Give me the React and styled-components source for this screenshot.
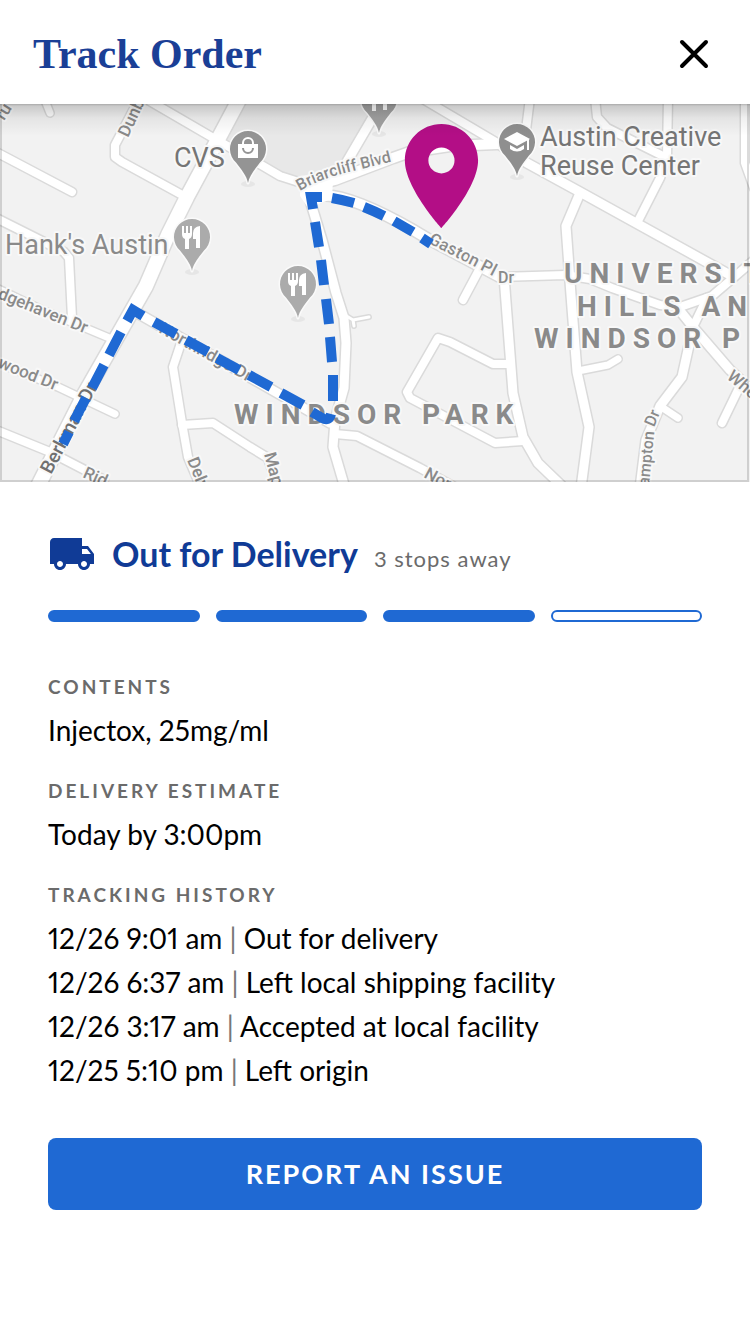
import React from "react";
import styled, { createGlobalStyle } from "styled-components";
import { MdLocalShipping } from "react-icons/md";

const GlobalStyle = createGlobalStyle`
  *, *::before, *::after { box-sizing: border-box; }
  body {
    margin: 0;
    background: #fff;
    color: #000;
    font-family: Lato, "Open Sans", sans-serif;
    font-variant-numeric: proportional-nums;
  }
  h1, h2, p, ol { margin: 0; padding: 0; }
`;

const Screen = styled.div`
  display: flex;
  flex-direction: column;
  min-height: 100vh;
  background: #fff;
`;

const Header = styled.header`
  position: relative;
  z-index: 1;
  display: flex;
  align-items: center;
  justify-content: space-between;
  height: 104px;
  padding: 4px 32px 0 33px;
  background: #fff;

  &::after {
    content: "";
    position: absolute;
    top: 100%;
    left: 0;
    right: 0;
    height: 32px;
    background: linear-gradient(
      rgba(0, 0, 0, 0.3),
      rgba(0, 0, 0, 0.17) 2px,
      rgba(0, 0, 0, 0.06) 14px,
      rgba(0, 0, 0, 0)
    );
    pointer-events: none;
  }
`;

const Title = styled.h1`
  color: #1a3f96;
  font: 700 42px/48px "Liberation Serif", serif;
`;

const CloseButton = styled.button`
  display: grid;
  place-items: center;
  width: 48px;
  height: 48px;
  padding: 0;
  border: 0;
  background: none;
  color: #000;
  cursor: pointer;
`;

const MapCanvas = styled.svg`
  display: block;
  width: 100%;
  height: auto;
  background: #f2f2f2;
`;

const Label = styled.text`
  font-family: Roboto, sans-serif;
  font-size: ${(p) => p.$size || 17}px;
  font-weight: ${(p) => p.$weight || 500};
  letter-spacing: ${(p) => p.$tracking || 0}px;
  fill: ${(p) => p.$color || "#8a8a8a"};
  stroke: #f8f8f8;
  stroke-width: 4px;
  stroke-linejoin: round;
  paint-order: stroke;
`;

const Details = styled.main`
  display: flex;
  flex-direction: column;
  padding: 48px;
`;

const Status = styled.div`
  display: flex;
  align-items: center;
  color: #103b96;
`;

const StatusText = styled.div`
  display: flex;
  align-items: baseline;
  gap: 16px;
  margin-left: 16px;
`;

const StatusTitle = styled.h2`
  font-size: 34px;
  font-weight: 700;
  line-height: 44px;
`;

const Stops = styled.span`
  color: #6b6b6b;
  font-size: 22px;
  letter-spacing: 1px;
`;

const Progress = styled.div`
  display: grid;
  grid-template-columns: repeat(4, 1fr);
  gap: 16px;
  margin: 32px 0 53px;
`;

const Step = styled.span`
  height: 12px;
  border: 2px solid #1f69d3;
  border-radius: 6px;
  background: ${(p) => (p.$done ? "#1f69d3" : "#fff")};
`;

const Section = styled.section`
  display: flex;
  flex-direction: column;
  gap: 9px;
  margin-bottom: 27px;
`;

const SectionTitle = styled.h2`
  color: #6b6b6b;
  font-size: 19px;
  font-weight: 700;
  line-height: 24px;
  letter-spacing: 3px;
  text-transform: uppercase;
`;

const Value = styled.p`
  font-size: 28px;
  line-height: 44px;
`;

const History = styled.ol`
  list-style: none;
  font-size: 28px;
  line-height: 44px;
`;

const Divider = styled.span`
  color: #777;
`;

const ReportButton = styled.button`
  height: 72px;
  margin-top: 19px;
  border: 0;
  border-radius: 8px;
  background: #1f69d3;
  color: #fff;
  font: 700 27px/32px Lato, sans-serif;
  letter-spacing: 2px;
  text-transform: uppercase;
  cursor: pointer;
`;

const ROADS = [
  [14, "M240 98 L215 145 L187 197 L168 235 L146 286 L85 393 L36 490"],
  [7, "M44 98 L50 113"],
  [8, "M-4 152 L72 192"],
  [8, "M-4 218 L64 252 L69 258 L72 318"],
  [8, "M136 105 L115 145 L115 157 L122 162 L184 196"],
  [8, "M148 100 L215 139 L263 166 L280 176 L305 184"],
  [9, "M376 112 L338 177"],
  [10, "M305 188 L335 180 L393 158 L410 152 L450 146 L497 144"],
  [8, "M423 99 L499 144"],
  [9, "M499 144 L527 163 L580 192 L730 275"],
  [8, "M754 260 L712 296 L680 307"],
  [8, "M707 298 L693 327"],
  [9, "M677 307 L693 327 L730 370 L754 392"],
  [9, "M693 327 L682 377 L660 406 L646 440 L640 488"],
  [7, "M660 406 L678 418"],
  [8, "M738 390 L722 423"],
  [8, "M500 277 L565 275 L590 279 L612 288 L660 305 L677 307"],
  [9, "M580 193 L566 226 L571 295 L577 372 L589 427 L581 488"],
  [7, "M578 371 L608 365 L618 359"],
  [8, "M530 98 L526 130"],
  [8, "M595 98 L597 117 L607 128 L665 157"],
  [8, "M668 98 L667 157 L660 178 L638 221"],
  [8, "M745 98 L745 163 L754 188"],
  [10, "M310 194 L332 196 Q366 201 430 240 L500 277"],
  [8, "M479 270 L463 300"],
  [9, "M309 197 L322 240 L336 293 L344 318 L346 343 L344 388 L335 420 L333 447 L345 488"],
  [3, "M345 315 L353 320 L369 317 M353 320 L354 326"],
  [8, "M335 434 L357 436 L420 468 L460 490"],
  [8, "M510 364 L493 364 L450 342 L438 338 L407 392 L410 398 L495 443 L523 441"],
  [9, "M504 276 L513 393 L523 437 L538 463 L566 490"],
  [7, "M-4 288 L40 309 L114 340"],
  [7, "M-4 362 L58 387 L115 414"],
  [8, "M-4 430 L50 452 L104 480"],
  [9, "M132 310 L330 423"],
  [8, "M182 340 L173 367 L182 423 L188 457 L202 490"],
  [8, "M182 425 L213 423 L250 447 L268 458 L278 488"],
];

const ROUTE = [
  "M63 444 L69 432",
  "M74 421 L86 398",
  "M92 388 L104 365",
  "M109 355 L121 332",
  "M127 321 L133 310 L143 316",
  "M154 322 L176 334",
  "M186 340 L208 352",
  "M217 358 L239 370",
  "M249 375 L271 387",
  "M281 393 L303 405",
  "M312 412 L322 418 Q329 422 331 414",
  "M333 401 L333 375",
  "M332 362 L330 337",
  "M329 324 L326 299",
  "M324 285 L321 260",
  "M319 247 L315 222",
  "M313 209 L311 197 L322 197",
  "M332 198 Q343 200 354 203",
  "M364 207 Q374 211 384 216",
  "M394 221 L413 232",
  "M422 238 L431 244",
].join(" ");

function PlacePin({ x, y, color, children }) {
  return (
    <g transform={`translate(${x} ${y})`}>
      <ellipse cx="0" cy="35" rx="7" ry="3" fill="#e6e6e6" />
      <path
        d="M0 34 C-1 27 -7 20 -12 13.4 A18 18 0 1 1 12 13.4 C7 20 1 27 0 34Z"
        fill={color}
        stroke="#fafafa"
        strokeWidth="3"
        strokeLinejoin="round"
        paintOrder="stroke"
      />
      {children}
    </g>
  );
}

const Cutlery = () => (
  <g fill="#fff">
    <path d="M-10 -11h2v7h2v-7h2v7h2v-7h2v8q0 4-3 5v10h-4v-10q-3-1-3-5Z" />
    <path d="M8 -11v22h-4v-9h-3v-6q0-6 7-7Z" />
  </g>
);

const Bag = () => (
  <g>
    <path d="M-5 -4 V-6 A5 5 0 0 1 5 -6 V-4" fill="none" stroke="#fff" strokeWidth="2" />
    <path d="M-10 -5H10V9H-10Z" fill="#fff" />
    <path d="M-5 -1 A5 5 0 0 0 5 -1" fill="none" stroke="#949494" strokeWidth="2" />
  </g>
);

const Cap = () => (
  <g fill="#fff">
    <path d="M-13 -3 L0 -10 L13 -3 L0 4Z" />
    <path d="M-7 3 L0 7 L7 3 V7 Q0 12 -7 7Z" />
    <path d="M10 -3h2v11h-2Z" />
  </g>
);

function DeliveryMap() {
  return (
    <MapCanvas viewBox="0 104 750 378" role="group" aria-label="Delivery route map">
      <defs>
        <path id="briarcliff" d="M300 191 Q318 180 345 173 L410 157" />
        <path id="gaston" d="M428 243 Q462 260 504 282" />
        <path id="hampton" d="M649 486 L655 425 L670 390" />
      </defs>
      <path d="M238 100 L215 140 L303 184 L340 174 L384 100Z" fill="#e8e8e8" />
      <g fill="none" stroke="#dadada" strokeLinecap="round" strokeLinejoin="round">
        {ROADS.map(([w, d]) => (
          <path key={d} d={d} strokeWidth={w + 3} />
        ))}
      </g>
      <path d="M300 176 L320 174 L333 180 L332 199 L318 204 L312 214 L300 196Z" fill="#fff" />
      <g fill="none" stroke="#fff" strokeLinecap="round" strokeLinejoin="round">
        {ROADS.map(([w, d]) => (
          <path key={d} d={d} strokeWidth={w} />
        ))}
      </g>

      <Label transform="translate(4 121) rotate(-58)">ru</Label>
      <Label transform="translate(128 138) rotate(-65)">Dunb</Label>
      <Label $size={16}>
        <textPath href="#briarcliff">Briarcliff Blvd</textPath>
      </Label>
      <Label>
        <textPath href="#gaston">Gaston Pl</textPath>
      </Label>
      <Label x="498" y="283" $size={16}>Dr</Label>
      <Label transform="translate(-3 298) rotate(22)">dgehaven Dr</Label>
      <Label transform="translate(-3 367) rotate(22)">wood Dr</Label>
      <Label transform="translate(51 475) rotate(-62)" $size={19} $color="#707070">
        Berkman Dr
      </Label>
      <Label transform="translate(82 477) rotate(24)">Rid</Label>
      <Label transform="translate(187 460) rotate(68)">Dely</Label>
      <Label transform="translate(264 454) rotate(75)">Map</Label>
      <Label transform="translate(423 477) rotate(28)">Nor</Label>
      <Label transform="translate(158 332) rotate(29)">Northridge Dr</Label>
      <Label $size={16}>
        <textPath href="#hampton">ampton Dr</textPath>
      </Label>
      <Label transform="translate(726 378) rotate(40)">Whe</Label>

      <Label x="174" y="167" $size={27} $weight={400} $color="#757575">CVS</Label>
      <Label x="5" y="254" $size={27} $weight={400}>Hank's Austin</Label>
      <Label x="540" y="146" $size={27} $weight={400} $color="#757575">Austin Creative</Label>
      <Label x="540" y="175" $size={27} $weight={400} $color="#757575">Reuse Center</Label>
      <Label x="564" y="283" $size={28} $weight={700} $tracking={7}>UNIVERSIT</Label>
      <Label x="577" y="316" $size={28} $weight={700} $tracking={7}>HILLS AN</Label>
      <Label x="534" y="348" $size={28} $weight={700} $tracking={7}>WINDSOR P</Label>
      <Label x="234" y="424" $size={28} $weight={700} $tracking={7}>WINDSOR PARK</Label>

      <PlacePin x={248} y={149} color="#949494"><Bag /></PlacePin>
      <PlacePin x={192} y={237} color="#ababab"><Cutlery /></PlacePin>
      <PlacePin x={298} y={284} color="#ababab"><Cutlery /></PlacePin>
      <PlacePin x={379} y={99} color="#a2a2a2"><Cutlery /></PlacePin>
      <PlacePin x={517} y={142} color="#8f8f8f"><Cap /></PlacePin>

      <path d={ROUTE} fill="none" stroke="#1f69d3" strokeWidth="10" />
      <path
        transform="translate(378.7 113.6) scale(5.23 5.2)"
        fill="#b30e86"
        fillRule="evenodd"
        d="M12 2C8.13 2 5 5.13 5 9c0 5.25 7 13 7 13s7-7.75 7-13c0-3.87-3.13-7-7-7zm0 9.5a2.5 2.5 0 1 1 0-5 2.5 2.5 0 0 1 0 5z"
      />
      <path d="M1 104V481H748V104" fill="none" stroke="#000" strokeOpacity="0.14" strokeWidth="2" />
    </MapCanvas>
  );
}

const EVENTS = [
  ["12/26 9:01 am", "Out for delivery"],
  ["12/26 6:37 am", "Left local shipping facility"],
  ["12/26 3:17 am", "Accepted at local facility"],
  ["12/25 5:10 pm", "Left origin"],
];

export default function App() {
  return (
    <Screen>
      <GlobalStyle />
      <Header>
        <Title>Track Order</Title>
        <CloseButton type="button" aria-label="Close">
          <svg width="32" height="32" viewBox="0 0 32 32" aria-hidden="true">
            <path d="M4 4 L28 28 M28 4 L4 28" stroke="currentColor" strokeWidth="4" strokeLinecap="round" />
          </svg>
        </CloseButton>
      </Header>
      <DeliveryMap />
      <Details>
        <Status>
          <MdLocalShipping size={48} aria-hidden="true" />
          <StatusText>
            <StatusTitle>Out for Delivery</StatusTitle>
            <Stops>3 stops away</Stops>
          </StatusText>
        </Status>
        <Progress role="img" aria-label="Step 3 of 4">
          <Step $done />
          <Step $done />
          <Step $done />
          <Step />
        </Progress>
        <Section>
          <SectionTitle>Contents</SectionTitle>
          <Value>Injectox, 25mg/ml</Value>
        </Section>
        <Section>
          <SectionTitle>Delivery Estimate</SectionTitle>
          <Value>Today by 3:00pm</Value>
        </Section>
        <Section>
          <SectionTitle>Tracking History</SectionTitle>
          <History>
            {EVENTS.map(([time, text]) => (
              <li key={time}>
                {time} <Divider>|</Divider> {text}
              </li>
            ))}
          </History>
        </Section>
        <ReportButton type="button">Report an issue</ReportButton>
      </Details>
    </Screen>
  );
}
